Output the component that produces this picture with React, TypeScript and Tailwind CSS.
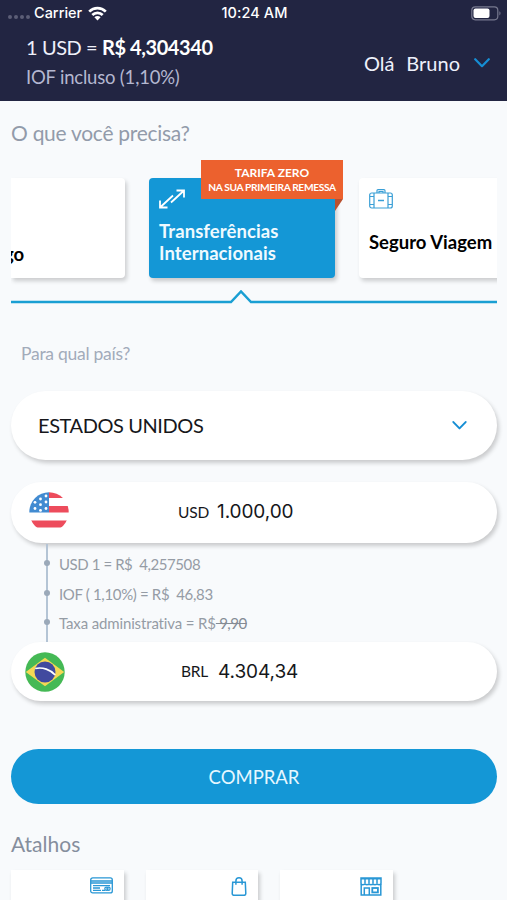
import React, { useState } from 'react';

const StatusBar: React.FC = () => (
  <div className="grid grid-cols-3 items-center h-[26px] pl-2 pr-[6px] text-[14.5px] font-medium font-['Inter',sans-serif] text-white">
    <div className="flex items-center">
      <div className="flex gap-[2px] mt-[7px] mr-[4px]">
        {[0, 1, 2, 3].map(i => (
          <span key={i} className="w-[4px] h-[4px] rounded-full bg-[#5c5e76]" />
        ))}
      </div>
      <span>Carrier</span>
      <svg className="ml-[6px] w-[19px] h-[15px]" viewBox="0 0 19 15" fill="none" stroke="white" strokeWidth="2.7">
        <path d="M1.2 5.6a11.8 11.8 0 0 1 16.6 0" />
        <path d="M4.3 9a7.4 7.4 0 0 1 10.4 0" />
        <path d="M9.5 14.5 6.4 11.3a4.4 4.4 0 0 1 6.2 0z" fill="white" stroke="none" />
      </svg>
    </div>
    <span className="text-center whitespace-nowrap tracking-[0.1px]">10:24 AM</span>
    <svg className="justify-self-end w-[30px] h-[15px]" viewBox="0 0 30 15" fill="none">
      <rect x="0.8" y="0.8" width="26" height="13" rx="3.5" stroke="#77798f" strokeWidth="1.2" />
      <rect x="2.5" y="2.5" width="16" height="9.6" rx="2" fill="white" />
      <path d="M28.4 5.3v4.2c1.5-.7 1.5-3.5 0-4.2z" fill="#77798f" />
    </svg>
  </div>
);

const Chevron: React.FC<{ className?: string }> = ({ className }) => (
  <svg className={className} viewBox="0 0 16 10" fill="none" stroke="#168ed4" strokeWidth="2.2" strokeLinecap="round" strokeLinejoin="round">
    <path d="M1.2 1.2 8 8.2l6.8-7" />
  </svg>
);

const ArrowsIcon: React.FC = () => (
  <svg className="w-[26px] h-[20px]" viewBox="0 0 26 20" fill="none" stroke="white" strokeWidth="1.8">
    <path d="M17.5 1.5H25V8.500M24.500 2 12 13.500" />
    <path d="M8.500 18.500H1V11.500M1.500 18 14 6.500" />
  </svg>
);

const SuitcaseIcon: React.FC = () => (
  <svg className="w-[24px] h-[20px]" viewBox="0 0 24 20" fill="none" stroke="#3a9fd6" strokeWidth="1.2">
    <rect x="0.7" y="4" width="22.6" height="15" rx="2" />
    <path d="M5 4v15M19 4v15M1 7.5h4M1 15.5h4M19 7.5h4M19 15.5h4M8 4V1.8C8 1 8.4.7 9 .7h6c.6 0 1 .3 1 1.1V4M10 4V2.5h4V4" />
    <path d="M9 11.5h6" strokeWidth="1.5" />
  </svg>
);

const CardIcon: React.FC = () => (
  <svg className="w-[23px] h-[17px]" viewBox="0 0 23 17" fill="none" stroke="#2997d5" strokeWidth="1.3">
    <rect x="0.7" y="0.9" width="21.6" height="15" rx="2" />
    <path d="M1 4h21M1 6h21M3 8.7h17M3 11h7M3 13.4h8M12 13.4h3" />
    <circle cx="16.4" cy="11.7" r="1.6" />
    <circle cx="18.5" cy="11.7" r="1.6" />
  </svg>
);

const BagIcon: React.FC = () => (
  <svg className="w-[16px] h-[19px]" viewBox="0 0 16 19" fill="none" stroke="#2997d5" strokeWidth="1.5">
    <path d="M1.7 5.3h12.6l.5 11.2c0 1.1-.7 1.8-1.7 1.8H2.9c-1 0-1.7-.7-1.7-1.8z" />
    <path d="M4.9 7.8V4C4.900-.2 11.1-.2 11.100 4v3.800" />
  </svg>
);

const StoreIcon: React.FC = () => (
  <svg className="w-[22px] h-[19px]" viewBox="0 0 22 19" fill="none" stroke="#2997d5" strokeWidth="1.5">
    <path d="M1 1h20v5.2c0 2-3.900 2-4 0-.1 2-3.900 2-4 0-.1 2-3.900 2-4 0-.1 2-3.900 2-4 0-.1 2-4 2-4 0z" />
    <path d="M5 1v5M9 1v5M13 1v5M17 1v5M1 1.700h20" />
    <path d="M1.200 7v11h19.600V7M4.300 18v-7h5v7" />
    <rect x="12.300" y="11" width="5.600" height="4.400" strokeWidth="1.800" />
  </svg>
);

const UsaFlag: React.FC = () => (
  <svg className="w-[40px] h-[40px]" viewBox="0 0 40 40">
    <defs>
      <clipPath id="usa">
        <circle cx="20" cy="20" r="19.7" />
      </clipPath>
    </defs>
    <g clipPath="url(#usa)">
      <rect width="40" height="40" fill="#fff" />
      <path d="M20 0h20v6H20zM20 14h20v6.5H20zM0 28.5h40V35.500H0z" fill="#ed4c5c" />
      <path d="M0 0h20v20.5H0z" fill="#428bd1" />
      <g fill="#fff">
        {[[17, 4], [11.5, 7], [17, 10], [6, 10.3], [11.5, 12.7], [6, 16.5], [17, 16.5], [11.5, 18.4]].map(([x, y]) => (
          <circle key={`${x}-${y}`} cx={x} cy={y} r="1.4" />
        ))}
      </g>
    </g>
  </svg>
);

const BrazilFlag: React.FC = () => (
  <svg className="w-[40px] h-[40px]" viewBox="0 0 40 40">
    <circle cx="20" cy="20" r="19.7" fill="#45b955" />
    <path d="M.8 20 20 5.7 39.2 20 20 34.3z" fill="#f5d854" />
    <circle cx="20" cy="20" r="10.5" fill="#414a9f" />
    <path d="M10.2 16.500c7.500-1.700 15.300 1.200 20 6.500" stroke="#fff" strokeWidth="1.7" fill="none" />
  </svg>
);

const fees = [
  { label: 'USD 1 = R$ \u00a04,257508', style: 'h-[30px] tracking-[-0.42px]' },
  { label: 'IOF ( 1,10%) = R$ \u00a046,83', style: 'h-[30px] tracking-[-0.34px]' },
  { label: 'Taxa administrativa = R$', old: ' 9,90', style: 'h-[28px] tracking-[-0.14px]' },
];

const shortcuts = [
  { id: 'card', icon: <CardIcon /> },
  { id: 'bag', icon: <BagIcon /> },
  { id: 'store', icon: <StoreIcon /> },
];

export default function App() {
  const [amount] = useState({ usd: '1.000,00', brl: '4.304,34' });

  return (
    <div className="w-[507px] h-[900px] overflow-hidden bg-[#f8fafc] font-['Lato',sans-serif] [font-variant-ligatures:none]">
      {/* Header */}
      <header className="h-[101px] bg-[#222542]">
        <StatusBar />
        <div className="flex justify-between pl-[26px] pr-[17px]">
          <div className="pt-[6px] whitespace-nowrap">
            <p className="text-[20px] leading-[30px] tracking-[-0.42px] text-[#eef0fa]">
              1 USD = <span className="font-bold text-white">R$ 4,304340</span>
            </p>
            <p className="text-[18.5px] leading-[30px] tracking-[-0.2px] text-[#b4b7d0]">IOF incluso (1,10%)</p>
          </div>
          <button className="flex items-center h-[74px] text-[20px] text-[#eef0fa]">
            <span className="mr-[12px]">Olá</span>
            <span>Bruno</span>
            <Chevron className="w-[16px] h-[10px] ml-[14px]" />
          </button>
        </div>
      </header>

      <main className="px-[10px]">
        <h1 className="pt-[18px] pb-px pl-px text-[21px] leading-[28px] tracking-[-0.28px] text-[#929baa]">O que você precisa?</h1>

        {/* Services carousel */}
        <section className="ml-px flex gap-[24px] h-[142px] pt-[30px] overflow-hidden">
          <div className="flex items-end justify-start shrink-0 w-[114px] h-[100px] pb-[12px] bg-white rounded-r-[4px] shadow-[2px_3px_4px_rgba(0,0,0,0.18)]">
            <span className="-ml-[7px] text-[18.5px] leading-[24px] font-bold text-black">go</span>
          </div>
          <div className="relative shrink-0 w-[186px] h-[100px] pl-[10px] pt-[11px] bg-[#1497d6] rounded-[4px] shadow-[2px_3px_4px_rgba(0,0,0,0.2)]">
            <ArrowsIcon />
            <p className="mt-[11px] text-[18.5px] leading-[22px] tracking-[0.08px] font-bold text-[#effaff]">
              Transferências
              <br />
              Internacionais
            </p>
            <div className="absolute left-[52px] -top-[18px] w-[142px] h-[39px] pt-[5px] bg-[#ec612e] text-center text-white font-bold whitespace-nowrap">
              <p className="text-[12px] leading-[15px]">TARIFA ZERO</p>
              <p className="text-[10.2px] leading-[15px] tracking-[-0.34px]">NA SUA PRIMEIRA REMESSA</p>
              <svg className="absolute right-0 top-[39px] w-[8px] h-[12px]" viewBox="0 0 8 12">
                <path d="M0 0h8L0 12z" fill="#b9502f" />
              </svg>
            </div>
          </div>
          <div className="shrink-0 w-[150px] h-[100px] pl-[10px] pt-[11px] bg-white rounded-[4px] shadow-[2px_3px_4px_rgba(0,0,0,0.18)]">
            <SuitcaseIcon />
            <p className="mt-[21px] text-[18.5px] leading-[24px] font-bold text-black whitespace-nowrap">Seguro Viagem</p>
          </div>
        </section>

        <svg className="block ml-px w-[486px] h-[14px]" viewBox="0 0 486 14" fill="none" stroke="#1a9fd3">
          <path d="M0 12h220l10-10.500 10 10.500h246" strokeWidth="2.5" />
        </svg>

        <p className="mt-[38px] ml-[11px] text-[17.5px] leading-[24px] tracking-[-0.27px] text-[#a2abba]">Para qual país?</p>

        <button className="flex items-center justify-between mt-[25px] ml-px w-[486px] h-[69px] pl-[27px] pr-[30px] bg-white rounded-full shadow-[2px_3px_4px_rgba(0,0,0,0.19)] text-[20px] text-[#16171b]">
          <span className="mb-[2px] tracking-[-0.42px]">ESTADOS UNIDOS</span>
          <Chevron className="w-[15px] h-[9px]" />
        </button>

        {/* Conversion */}
        <div className="flex items-center mt-[22px] mb-px ml-px w-[486px] h-[61px] pl-[18px] bg-white rounded-full shadow-[2px_3px_4px_rgba(0,0,0,0.19)] text-[#16171b]">
          <div className="mb-[2px]"><UsaFlag /></div>
          <span className="ml-[109px] w-[39px] text-[15.5px] tracking-[-0.2px]">USD</span>
          <span className="font-['Inter',sans-serif] text-[19px] tracking-[-0.08px]">{amount.usd}</span>
        </div>

        <div className="relative h-[98px] pt-[5px]">
          <div className="absolute left-[36px] top-0 w-[1.5px] h-full bg-[#b4c4d5]" />
          {fees.map(fee => (
            <div key={fee.label} className={`relative flex items-center pl-[34px] ${fee.style}`}>
              <span className="w-[6px] h-[6px] mb-[3px] rounded-full bg-[#9ba9b9]" />
              <span className="ml-[9px] text-[15px] text-[#959ca5] whitespace-pre">
                {fee.label}
                {fee.old && <s className="text-[#858c95] tracking-[-0.5px]">{fee.old}</s>}
              </span>
            </div>
          ))}
        </div>

        <div className="flex items-center ml-px w-[486px] h-[59px] pl-[14px] bg-white rounded-full shadow-[2px_3px_4px_rgba(0,0,0,0.19)] text-[#16171b]">
          <BrazilFlag />
          <span className="ml-[116px] w-[37px] text-[15.5px] tracking-[-0.2px]">BRL</span>
          <span className="mt-[2px] font-['Inter',sans-serif] text-[19px] tracking-[-0.08px]">{amount.brl}</span>
        </div>

        <button className="block mt-[48px] ml-px w-[486px] h-[55px] pt-[2px] bg-[#1497d6] rounded-full text-[18.5px] text-[#e6f7ff]">COMPRAR</button>

        <h2 className="mt-[26px] pl-px text-[21px] leading-[28px] text-[#858e9d]">Atalhos</h2>

        <div className="flex gap-[22px] ml-px mt-[12px]">
          {shortcuts.map(item => (
            <div key={item.id} className="flex justify-end w-[112.5px] h-[100px] pt-[7px] pr-[11px] bg-white shadow-[2px_3px_4px_rgba(0,0,0,0.19)]">
              {item.icon}
            </div>
          ))}
        </div>
      </main>
    </div>
  );
}
